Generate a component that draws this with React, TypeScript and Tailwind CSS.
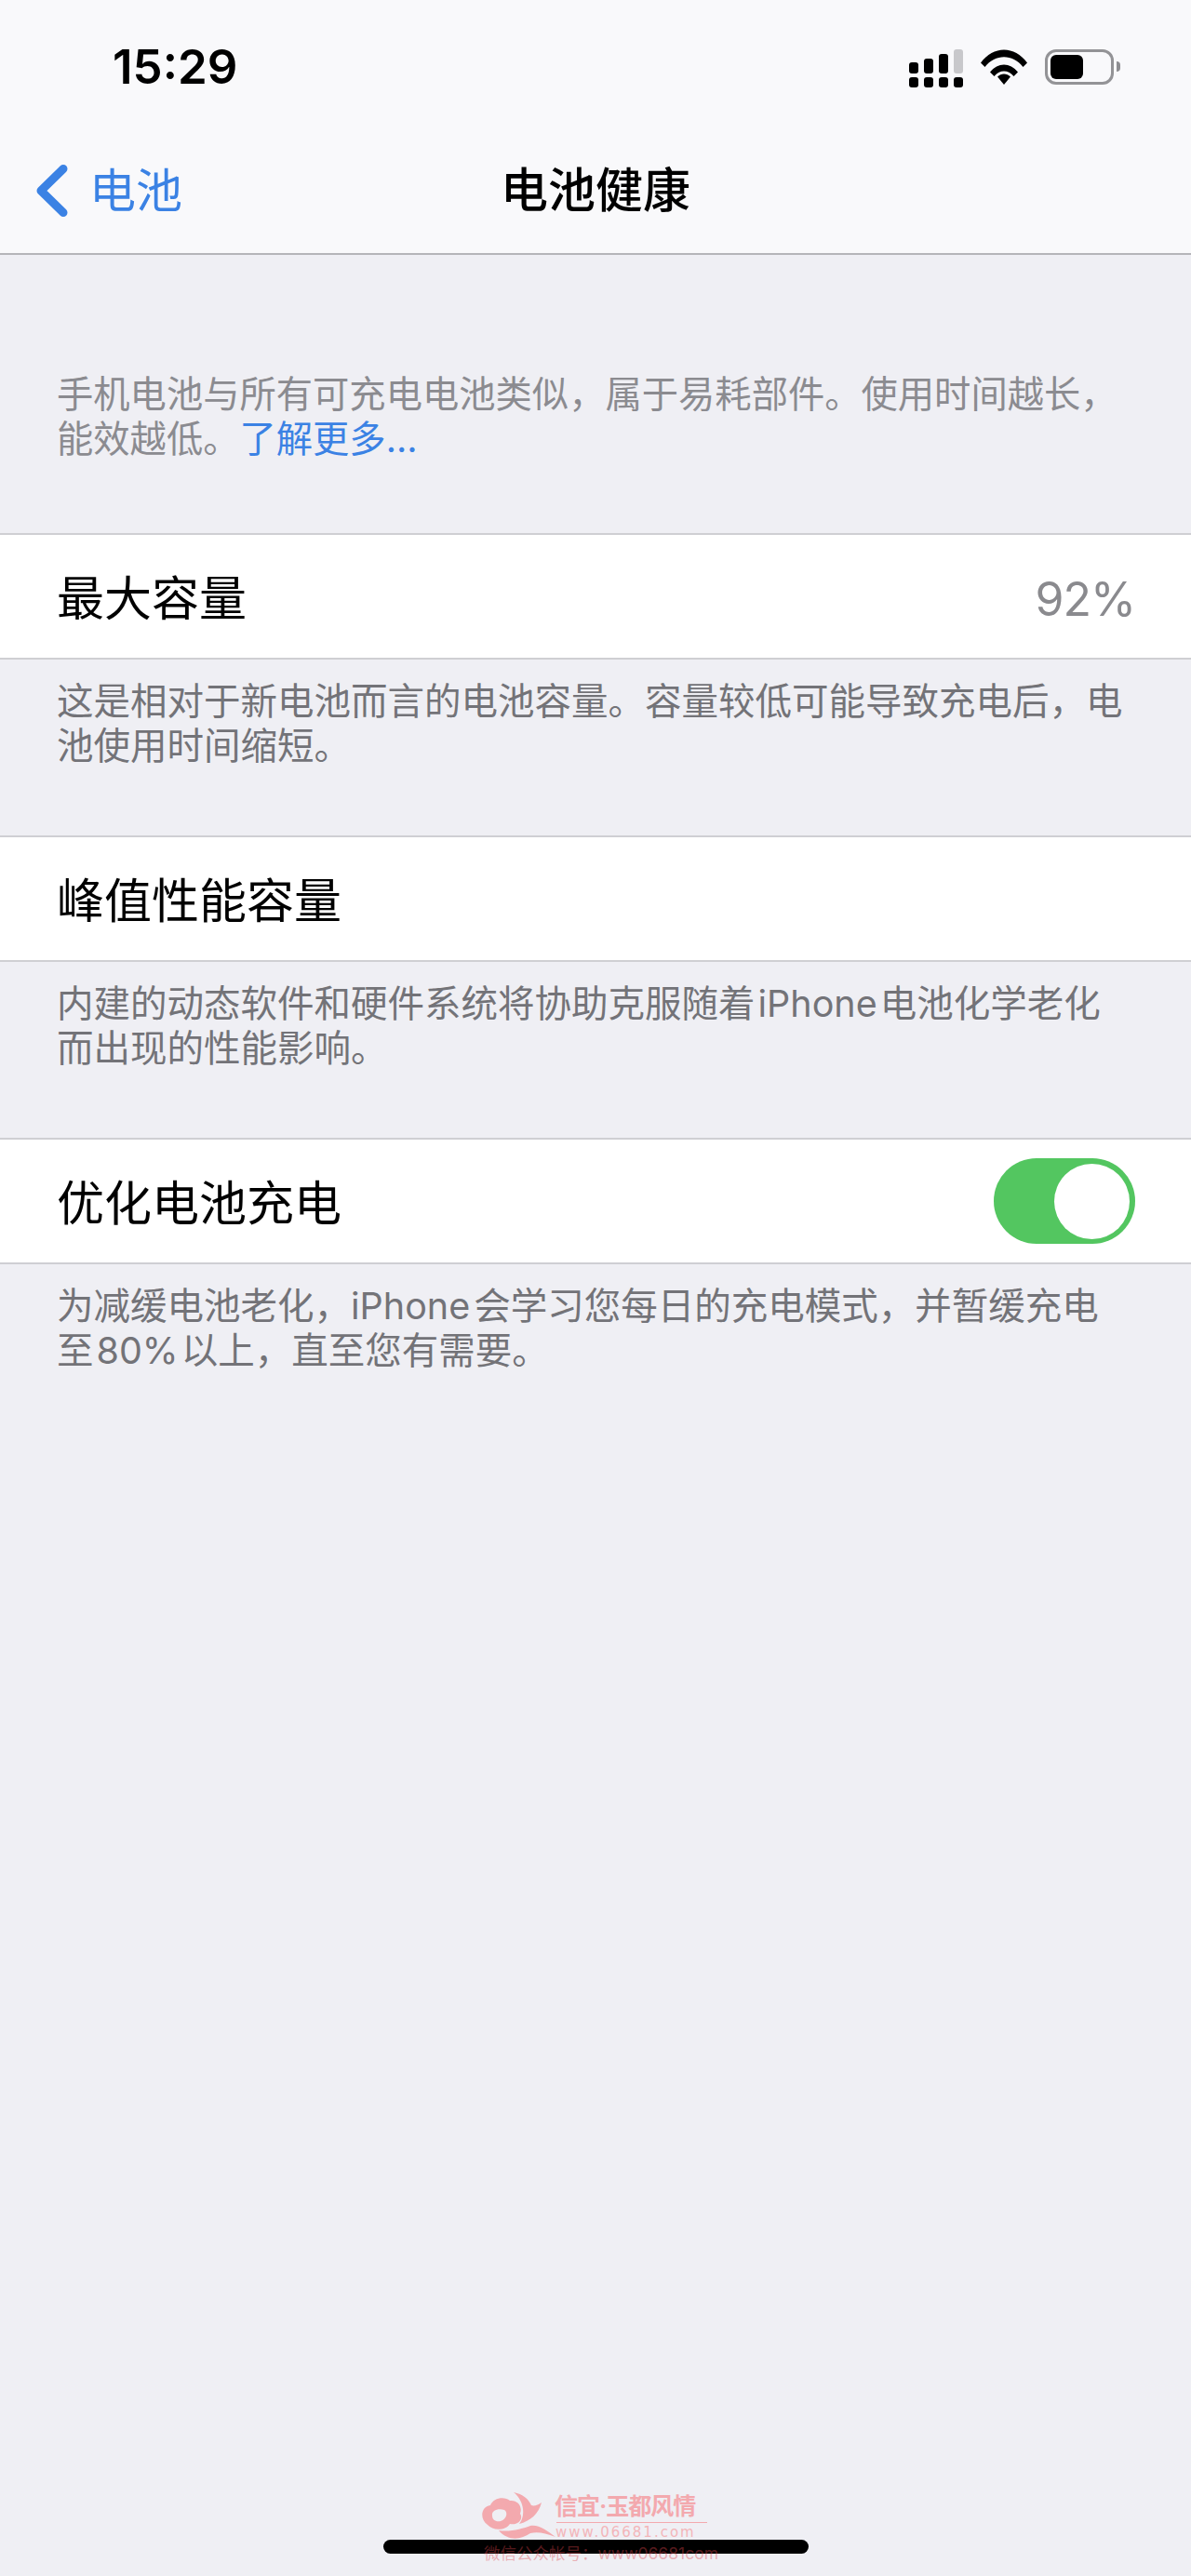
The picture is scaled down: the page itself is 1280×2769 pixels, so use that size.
const cjk = "font-['Inter','Noto_Sans_CJK_SC',sans-serif]"

function SignalIcon() {
  return (
    <svg width="58" height="41" viewBox="0 0 58 41" className="block">
      <rect x="0" y="14" width="10" height="12" rx="3" fill="#000" />
      <rect x="16" y="10" width="10" height="16" rx="3" fill="#000" />
      <rect x="32" y="5" width="10" height="21" rx="3" fill="#000" />
      <rect x="48" y="0" width="10" height="26" rx="3" fill="#c8c8cb" />
      <rect x="0" y="30" width="10" height="11" rx="3" fill="#000" />
      <rect x="16" y="30" width="10" height="11" rx="3" fill="#000" />
      <rect x="32" y="30" width="10" height="11" rx="3" fill="#000" />
      <rect x="48" y="30" width="10" height="11" rx="3" fill="#000" />
    </svg>
  )
}

function WifiIcon() {
  return (
    <svg width="50" height="38" viewBox="0 0 50 38" className="block">
      <path d="M0 14.500C13.500 -4.200 36.500 -4.200 50 14.500L45.500 19C34.500 4.800 15.500 4.800 4.500 19Z" fill="#000" />
      <path d="M10 24.500C18.500 13.800 31.500 13.800 40 24.500L35.500 29C29 21.800 21 21.800 14.500 29Z" fill="#000" />
      <path d="M18 29.500C22 25.500 28 25.500 32 29.500L25 38Z" fill="#000" />
    </svg>
  )
}

function BatteryIcon() {
  return (
    <div className="flex items-center gap-[3px]">
      <div className="w-[74px] h-[38px] rounded-[12px] border-[3px] border-[#939396] p-[3px] flex">
        <div className="w-[35px] h-full rounded-[6px] bg-black" />
      </div>
      <div className="w-[4px] h-[11px] rounded-r-[4px] bg-[#8e8e91]" />
    </div>
  )
}

function Row({ label, children }: { label: string; children?: React.ReactNode }) {
  return (
    <div className="h-[136px] bg-white border-y-2 border-[#cfcfd3] pl-[61px] pr-[60px] pt-[5px] flex items-center justify-between">
      <span className="text-[51px] leading-[60px] text-black">{label}</span>
      {children}
    </div>
  )
}

function Note({ children }: { children: React.ReactNode }) {
  return (
    <p className="pl-[61px] pt-[21px] pb-[72px] text-[39.500px] leading-[48px] text-[#737378]">{children}</p>
  )
}

function Watermark() {
  return (
    <div className="absolute left-[518px] top-[2678px] w-[250px] h-[76px] pointer-events-none">
      <svg width="82" height="56" viewBox="0 0 82 56" className="absolute left-0 top-0" fill="none">
        <path d="M6 36C-3 30 -1 16 9 15C12 7 24 5 30 10C38 9 44 16 41 24C45 30 38 37 30 35C26 42 12 43 6 36Z" fill="#f3a9ae" />
        <path d="M11 26C10 20 18 18 24 20C28 22 27 30 20 32C15 33 11 31 11 26Z" fill="#efeff4" />
        <path d="M34 1C44 3 50 8 53 15C56 16 60 15 64 12C61 24 52 32 40 35C46 28 47 12 34 1Z" fill="#f3a9ae" />
        <path d="M18 42C30 44 44 40 52 37C60 35 70 42 79 49C68 45 60 43 52 45C42 52 28 54 18 42Z" fill="#f3a9ae" />
      </svg>
      <span className="absolute left-[78px] top-[1px] text-[25px] leading-[30px] font-bold tracking-[-1px] whitespace-nowrap text-[#f3a9ae] font-['Inter','Noto_Sans_CJK_SC',serif]">信宜·玉都风情</span>
      <div className="absolute left-[80px] top-[33px] w-[162px] h-px bg-[#f3a9ae]" />
      <span className="absolute left-[79px] top-[35px] text-[15px] leading-[18px] tracking-[2px] whitespace-nowrap text-[#f3b5b9] font-['DejaVu_Sans',sans-serif]">www.06681.com</span>
      <span className="absolute left-[2px] top-[57px] text-[17.500px] leading-[20px] whitespace-nowrap text-[#e1464f]/40 font-['Inter','Noto_Sans_CJK_SC',sans-serif]">微信公众帐号：www06681com</span>
    </div>
  )
}

export default function App() {
  return (
    <div className={`relative w-full h-[2769px] overflow-hidden bg-[#efeff4] ${cjk}`}>
      <header className="h-[274px] bg-[#f9f9fb] border-b-2 border-[#b5b5b9]">
        <div className="h-[144px] pl-[121px] pr-[76px] flex items-center justify-between">
          <span className="text-[51px] leading-[60px] font-semibold text-black">15:29</span>
          <div className="flex items-start gap-[19px] pt-[2px]">
            <SignalIcon />
            <WifiIcon />
            <BatteryIcon />
          </div>
        </div>
        <div className="h-[122px] grid grid-cols-3 items-center">
          <div className="pl-[39px] flex items-center gap-[23px] text-[#3b82e4]">
            <svg width="34" height="56" viewBox="0 0 34 56" fill="none" className="block">
              <path d="M29 4.500L5 28L29 51.500" stroke="#3b82e4" strokeWidth="9" strokeLinecap="round" strokeLinejoin="round" />
            </svg>
            <span className="text-[50px] leading-[60px]">电池</span>
          </div>
          <h1 className="text-center text-[51px] leading-[60px] font-medium text-black whitespace-nowrap">电池健康</h1>
        </div>
      </header>

      <p className="pl-[61px] pt-[126px] pb-[77px] text-[39.300px] leading-[48px] text-[#8b8b90]">
        手机电池与所有可充电电池类似，属于易耗部件。使用时间越长，<br />
        能效越低。<span className="text-[#3b82e4]">了解更多...</span>
      </p>

      <Row label="最大容量">
        <span className="text-[50px] leading-[60px] tracking-[-1px] text-[#8a8a8e]">92%</span>
      </Row>
      <Note>
        这是相对于新电池而言的电池容量。容量较低可能导致充电后，电<br />
        池使用时间缩短。
      </Note>

      <Row label="峰值性能容量" />
      <Note>
        内建的动态软件和硬件系统将协助克服随着<span className="px-[3px]">iPhone</span>电池化学老化<br />
        而出现的性能影响。
      </Note>

      <Row label="优化电池充电">
        <div className="w-[152px] h-[92px] -mt-[5px] rounded-full bg-[#53c660] flex items-center justify-end pr-[6px]">
          <div className="w-[81px] h-[81px] rounded-full bg-white" />
        </div>
      </Row>
      <Note>
        为减缓电池老化，<span className="pr-[4px]">iPhone</span>会学习您每日的充电模式，并暂缓充电<br />
        至<span className="px-[3px]">80%</span>以上，直至您有需要。
      </Note>

      <div className="absolute left-[412px] top-[2730px] w-[457px] h-[15px] rounded-full bg-black" />
      <Watermark />
    </div>
  )
}
